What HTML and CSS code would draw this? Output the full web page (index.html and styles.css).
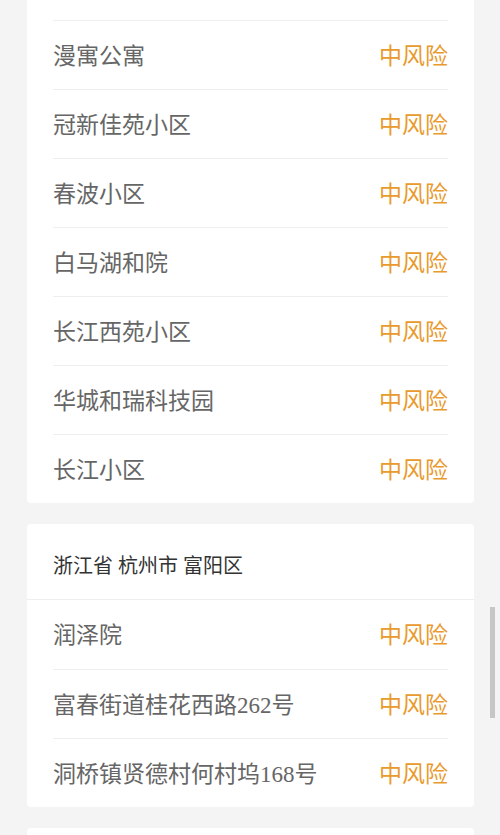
FILE: index.html
```html
<!DOCTYPE html>
<html lang="zh-CN">

<head>
    <meta charset="UTF-8">
    <meta name="viewport" content="width=device-width, initial-scale=1.0">
    <title>风险地区</title>
    <link rel="stylesheet" href="styles.css">
</head>

<body>
    <div class="page">
        <div class="card first">
            <div class="row"><span class="name">漫寓公寓</span><span class="level">中风险</span></div>
            <div class="row"><span class="name">冠新佳苑小区</span><span class="level">中风险</span></div>
            <div class="row"><span class="name">春波小区</span><span class="level">中风险</span></div>
            <div class="row"><span class="name">白马湖和院</span><span class="level">中风险</span></div>
            <div class="row"><span class="name">长江西苑小区</span><span class="level">中风险</span></div>
            <div class="row"><span class="name">华城和瑞科技园</span><span class="level">中风险</span></div>
            <div class="row"><span class="name">长江小区</span><span class="level">中风险</span></div>
        </div>

        <div class="card">
            <div class="area">浙江省 杭州市 富阳区</div>
            <div class="row"><span class="name">润泽院</span><span class="level">中风险</span></div>
            <div class="row"><span class="name">富春街道桂花西路262号</span><span class="level">中风险</span></div>
            <div class="row"><span class="name">洞桥镇贤德村何村坞168号</span><span class="level">中风险</span></div>
        </div>

        <div class="card last"></div>
    </div>

    <div class="scroll-thumb"></div>
</body>

</html>
```

FILE: styles.css
```css
* {
    box-sizing: border-box;
}

body {
    margin: 0;
    background-color: #f4f4f4;
    font-family: "Liberation Serif", "Noto Sans CJK SC", serif;
    overflow: hidden;
}

.page {
    padding: 0 26px 0 27px;
}

.card {
    background: #fff;
    border-radius: 4px;
    margin-bottom: 21px;
}

.card.first {
    padding-top: 20px;
    border-radius: 0 0 4px 4px;
}

.card.last {
    height: 60px;
}

.area {
    height: 76px;
    padding: 5px 26px 0;
    display: flex;
    align-items: center;
    font-size: 20px;
    color: #333;
    border-bottom: 1px solid #eee;
}

.row {
    margin: 0 26px;
    height: 69px;
    padding-bottom: 3px;
    display: flex;
    align-items: center;
    justify-content: space-between;
    border-top: 1px solid #eee;
    font-size: 23px;
}

.area + .row {
    border-top: none;
}

.name {
    color: #666;
}

.level {
    color: #e99a2c;
}

.scroll-thumb {
    position: fixed;
    right: 5px;
    top: 607px;
    width: 5px;
    height: 111px;
    background: #c6c6c6;
}
```
